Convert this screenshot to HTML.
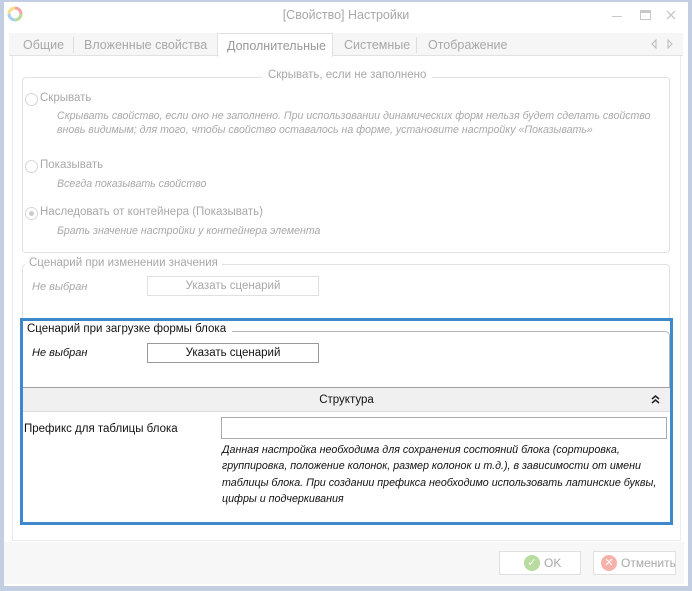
<!DOCTYPE html>
<html><head><meta charset="utf-8"><style>
*{margin:0;padding:0;box-sizing:border-box}
body{width:692px;height:591px;background:#c3cee2;font-family:"Liberation Sans","DejaVu Sans",sans-serif;font-size:12px;position:relative;overflow:hidden}
.a{position:absolute;white-space:nowrap}
.g{color:#a8a8a8}
.i{font-style:italic}
.rad{position:absolute;width:13px;height:13px;border:1px solid #d6d6d6;border-radius:50%;background:#fff}
.btn{position:absolute;border:1px solid #ccc;background:#fff;text-align:center;line-height:18px}
</style></head><body>
<div class="a" style="left:4px;top:2px;width:684px;height:584px;background:#fff"></div>
<svg class="a" style="left:7px;top:6px" width="16" height="16" viewBox="0 0 16 16">
<path d="M8 2 A6 6 0 0 1 14 8" stroke="#f3a3a3" stroke-width="3" fill="none"/>
<path d="M14 8 A6 6 0 0 1 8 14" stroke="#b7dc9a" stroke-width="3" fill="none"/>
<path d="M8 14 A6 6 0 0 1 2 8" stroke="#a8cff0" stroke-width="3" fill="none"/>
<path d="M2 8 A6 6 0 0 1 8 2" stroke="#f8dc8a" stroke-width="3" fill="none"/>
</svg>
<div class="a g" style="left:0;width:692px;text-align:center;top:8px;font-size:12.5px">[Свойство] Настройки</div>
<div class="a" style="left:612px;top:16px;width:10px;height:1px;background:#c8c8c8"></div>
<div class="a" style="left:640px;top:10px;width:11px;height:10px;border:1px solid #c8c8c8;border-top:3px solid #c8c8c8"></div>
<svg class="a" style="left:666px;top:10px" width="10" height="10"><path d="M1 1L9 9M9 1L1 9" stroke="#c8c8c8" stroke-width="1.3"/></svg>
<div class="a" style="left:9px;top:33px;width:674px;height:23px;background:#f6f6f6;border-bottom:1px solid #e2e2e2"></div>
<div class="a g" style="left:23px;top:38px;font-size:12.5px">Общие</div>
<div class="a" style="left:73px;top:37px;width:1px;height:16px;background:#ddd"></div>
<div class="a g" style="left:84px;top:38px;font-size:12.5px">Вложенные свойства</div>
<div class="a" style="left:217px;top:33px;width:116px;height:24px;background:#fff;border:1px solid #e2e2e2;border-bottom:none"></div>
<div class="a g" style="left:227px;top:39px;font-size:12.5px;color:#999">Дополнительные</div>
<div class="a g" style="left:344px;top:38px;font-size:12.5px">Системные</div>
<div class="a" style="left:416px;top:37px;width:1px;height:16px;background:#ddd"></div>
<div class="a g" style="left:428px;top:38px;font-size:12.5px">Отображение</div>
<svg class="a" style="left:651px;top:39px" width="22" height="10"><path d="M5 1L1 5L5 9Z M17 1L21 5L17 9Z" stroke="#bbb" fill="none"/></svg>
<div class="a" style="left:12px;top:56px;width:669px;height:485px;border:1px solid #ececec;border-top:none"></div>
<div class="a" style="left:22px;top:77px;width:648px;height:176px;border:1px solid #e2e2e2;border-radius:4px"></div>
<div class="a g" style="left:262px;top:69px;background:#fff;padding:0 6px;font-size:11.5px">Скрывать, если не заполнено</div>
<div class="rad" style="left:25px;top:93px"></div>
<div class="a g" style="left:40px;top:92px;font-size:11.5px">Скрывать</div>
<div class="a g i" style="left:57px;top:110px;font-size:10.6px;line-height:13.5px">Скрывать свойство, если оно не заполнено. При использовании динамических форм нельзя будет сделать свойство<br>вновь видимым; для того, чтобы свойство оставалось на форме, установите настройку «Показывать»</div>
<div class="rad" style="left:25px;top:160px"></div>
<div class="a g" style="left:40px;top:159px;font-size:11.5px">Показывать</div>
<div class="a g i" style="left:57px;top:178px;font-size:10.6px">Всегда показывать свойство</div>
<div class="rad" style="left:25px;top:207px"></div>
<div class="a" style="left:29px;top:211px;width:5px;height:5px;border-radius:50%;background:#ccc"></div>
<div class="a g" style="left:40px;top:206px;font-size:11.5px">Наследовать от контейнера (Показывать)</div>
<div class="a g i" style="left:57px;top:225px;font-size:10.6px">Брать значение настройки у контейнера элемента</div>
<div class="a" style="left:22px;top:264px;width:648px;height:60px;border:1px solid #e2e2e2;border-bottom:none;border-radius:4px 4px 0 0"></div>
<div class="a g" style="left:25px;top:257px;background:#fff;padding:0 4px;font-size:11.5px">Сценарий при изменении значения</div>
<div class="a g i" style="left:32px;top:281px;font-size:11px">Не выбран</div>
<div class="btn g" style="left:147px;top:276px;width:172px;height:20px;border-color:#e0e0e0;font-size:11.5px">Указать сценарий</div>
<div class="a" style="left:20px;top:318px;width:653px;height:207px;border:3px solid #3d89cb;background:#fff"></div>
<div class="a" style="left:24px;top:331px;width:646px;height:57px;border:1px solid #b5b5b5;border-left:none;border-bottom:none;border-radius:0 5px 0 0"></div>
<div class="a" style="left:24px;top:323px;background:#fff;padding:0 6px 0 3px;font-size:11.5px;color:#111">Сценарий при загрузке формы блока</div>
<div class="a i" style="left:32px;top:347px;font-size:11px;color:#111">Не выбран</div>
<div class="btn" style="left:147px;top:343px;width:172px;height:20px;border-color:#999;font-size:11.5px;color:#111">Указать сценарий</div>
<div class="a" style="left:23px;top:387px;width:647px;height:25px;background:#f0f0f0;border-top:1px solid #a0a0a0;border-bottom:1px solid #ddd"></div>
<div class="a" style="left:23px;top:394px;width:647px;text-align:center;font-size:11.5px;color:#111">Структура</div>
<svg class="a" style="left:651px;top:395px" width="9" height="9"><path d="M1 4L4.5 1L8 4M1 8L4.5 5L8 8" stroke="#222" stroke-width="1.5" fill="none"/></svg>
<div class="a" style="left:24px;top:423px;font-size:11.5px;color:#111">Префикс для таблицы блока</div>
<div class="a" style="left:221px;top:417px;width:446px;height:22px;border:1px solid #aaa"></div>
<div class="a i" style="left:222px;top:442px;font-size:10.7px;line-height:16.3px;color:#111">Данная настройка необходима для сохранения состояний блока (сортировка,<br>группировка, положение колонок, размер колонок и т.д.), в зависимости от имени<br>таблицы блока. При создании префикса необходимо использовать латинские буквы,<br>цифры и подчеркивания</div>
<div class="a" style="left:4px;top:542px;width:680px;height:42px;background:#f7f7f7"></div>
<div class="btn" style="left:499px;top:551px;width:82px;height:24px;border-color:#e0e0e0;line-height:22px"></div>
<div class="a" style="left:524px;top:555px;width:16px;height:16px;border-radius:50%;background:#b8dca0;color:#fff;font-size:11px;text-align:center;line-height:16px">✓</div>
<div class="a g" style="left:544px;top:556px;font-size:12px">OK</div>
<div class="btn" style="left:593px;top:551px;width:83px;height:24px;border-color:#e0e0e0"></div>
<div class="a" style="left:601px;top:555px;width:16px;height:16px;border-radius:50%;background:#f5b1aa;color:#fff;font-size:11px;text-align:center;line-height:16px">✕</div>
<div class="a g" style="left:621px;top:556px;font-size:12px">Отменить</div>
</body></html>
